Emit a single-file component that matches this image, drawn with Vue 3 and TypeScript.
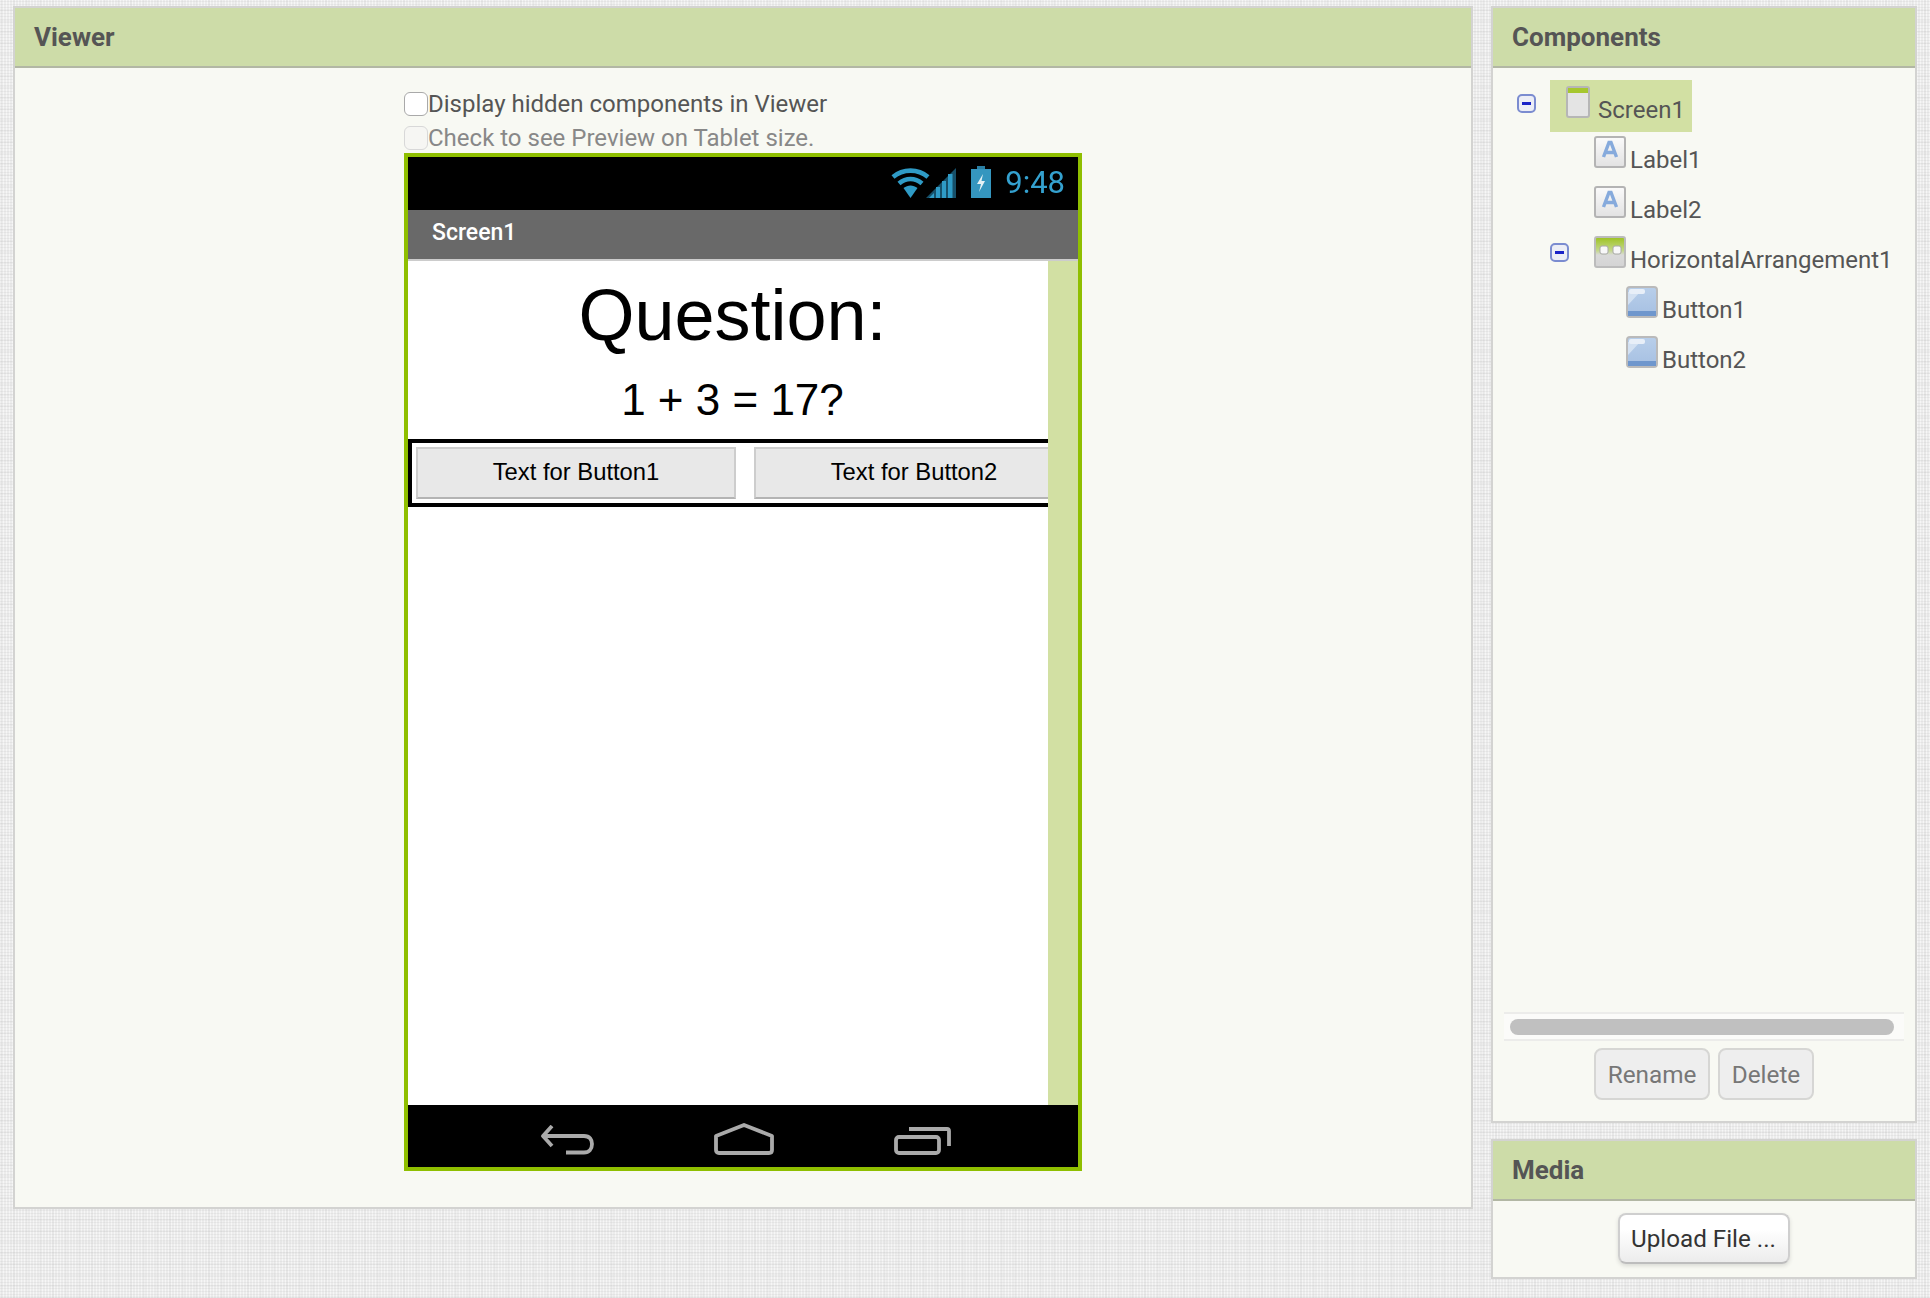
<script setup lang="ts">
interface TreeRow {
  name: string;
  icon: 'screen' | 'label' | 'arrangement' | 'button';
  depth: number;
  collapsible?: boolean;
  selected?: boolean;
}

const rows: TreeRow[] = [
  { name: 'Screen1', icon: 'screen', depth: 0, collapsible: true, selected: true },
  { name: 'Label1', icon: 'label', depth: 1 },
  { name: 'Label2', icon: 'label', depth: 1 },
  { name: 'HorizontalArrangement1', icon: 'arrangement', depth: 1, collapsible: true },
  { name: 'Button1', icon: 'button', depth: 2 },
  { name: 'Button2', icon: 'button', depth: 2 },
];
</script>

<template>
  <div class="page">
    <section class="panel viewer">
      <header class="panel-head">Viewer</header>
      <div class="viewer-body">
        <div class="viewer-col">
          <label class="check-row row-one">
            <input type="checkbox" class="box" />
            <span>Display hidden components in Viewer</span>
          </label>
          <label class="check-row row-two">
            <input type="checkbox" class="box" disabled />
            <span>Check to see Preview on Tablet size.</span>
          </label>

          <div class="phone">
            <div class="status-bar">
              <svg class="wifi" viewBox="0 0 39 30" width="39" height="30">
                <g fill="none" stroke="#2f9bc6" stroke-width="4.600">
                  <path d="M2 9C12 0.500 27 0.500 37 9" />
                  <path d="M8 15.500C15 9.500 24 9.500 31 15.500" />
                </g>
                <path d="M12.500 20C17 16.500 22 16.500 26.500 20L19.500 30Z" fill="#2f9bc6" />
              </svg>
              <svg class="signal" viewBox="0 0 30 30" width="30" height="30">
                <path d="M0 30L30 0V30Z" fill="#16506a" />
                <g fill="#2f9bc6">
                  <path d="M3 30L8 25V30Z" />
                  <rect x="10" y="19" width="4" height="11" />
                  <rect x="16" y="13" width="4" height="17" />
                  <rect x="22" y="6" width="4.500" height="24" />
                </g>
              </svg>
              <svg class="battery" viewBox="0 0 20 32" width="20" height="32">
                <rect x="6" y="0" width="8" height="4" fill="#2a7fa3" />
                <rect x="0" y="3" width="20" height="29" fill="#3596bf" />
                <path d="M12 8L6 18H10L8 26L14 15H10.500Z" fill="#e6f1f5" />
              </svg>
              <span class="clock">9:48</span>
            </div>
            <div class="title-bar">Screen1</div>

            <div class="phone-content">
              <div class="form">
                <div class="question">Question:</div>
                <div class="sum">1 + 3 = 17?</div>
                <div class="arrangement">
                  <div class="form-btn">Text for Button1</div>
                  <div class="form-btn">Text for Button2</div>
                </div>
              </div>
              <div class="strip"></div>
            </div>

            <div class="nav-bar">
              <svg class="nav-back" viewBox="0 0 54 30" width="54" height="30">
                <path d="M12 1L3 11L12 21M3 11H44C50 11 52 15 52 19C52 24 49 27.500 44 27.500H26" fill="none" stroke="#aaa" stroke-width="3.800" stroke-linejoin="round" />
              </svg>
              <svg class="nav-home" viewBox="0 0 60 32" width="60" height="32">
                <path d="M2 13L30 2L58 13V27C58 29 57 30 55 30H5C3 30 2 29 2 27Z" fill="none" stroke="#aaa" stroke-width="3.800" stroke-linejoin="round" />
              </svg>
              <svg class="nav-recent" viewBox="0 0 57 29" width="57" height="29">
                <rect x="2" y="11" width="43" height="16" rx="3" fill="none" stroke="#aaa" stroke-width="3.800" />
                <path d="M15 3H53C54.500 3 55 3.500 55 5V20" fill="none" stroke="#aaa" stroke-width="3.800" />
              </svg>
            </div>
          </div>
        </div>
      </div>
    </section>

    <aside class="side">
      <section class="panel components">
        <header class="panel-head">Components</header>
        <div class="tree">
          <div
            v-for="row in rows"
            :key="row.name"
            class="tree-row"
            :class="`depth-${row.depth}`"
          >
            <span v-if="row.collapsible" class="toggle"><i></i></span>
            <span class="tree-item" :class="{ selected: row.selected }">
              <svg v-if="row.icon === 'screen'" class="ic" viewBox="0 0 24 32" width="24" height="32">
                <rect x="1" y="1" width="22" height="30" rx="2" fill="#e4e4e4" stroke="#b6b6b6" stroke-width="2" />
                <rect x="2" y="2" width="20" height="5" fill="#a6c72f" />
              </svg>
              <svg v-else-if="row.icon === 'label'" class="ic" viewBox="0 0 32 32" width="32" height="32">
                <defs>
                  <linearGradient id="label-bg" x1="0" y1="0" x2="0" y2="1">
                    <stop offset="0" stop-color="#fbfbfb" />
                    <stop offset="1" stop-color="#e2e2e2" />
                  </linearGradient>
                </defs>
                <rect x="1" y="1" width="30" height="30" rx="2" fill="url(#label-bg)" stroke="#b4b4b4" stroke-width="2" />
                <path d="M9.500 21L15 6.500H17L22.500 21M11.500 16.500H20.500" fill="none" stroke="#86aadc" stroke-width="3.400" />
              </svg>
              <svg v-else-if="row.icon === 'arrangement'" class="ic" viewBox="0 0 32 32" width="32" height="32">
                <defs>
                  <linearGradient id="arr-bg" x1="0" y1="0" x2="0" y2="1">
                    <stop offset="0" stop-color="#9cc21f" />
                    <stop offset="0.45" stop-color="#c4d88a" />
                    <stop offset="0.6" stop-color="#dadada" />
                    <stop offset="1" stop-color="#d4d4d4" />
                  </linearGradient>
                </defs>
                <rect x="1" y="1" width="30" height="30" rx="2" fill="url(#arr-bg)" stroke="#bcbcbc" stroke-width="2" />
                <rect x="6" y="10" width="8" height="8" rx="2" fill="#f8f8f8" stroke="#a8a8a8" />
                <rect x="19" y="10" width="8" height="8" rx="2" fill="#f8f8f8" stroke="#a8a8a8" />
              </svg>
              <svg v-else class="ic" viewBox="0 0 32 32" width="32" height="32">
                <defs>
                  <linearGradient id="btn-bg" x1="0" y1="0" x2="0" y2="1">
                    <stop offset="0" stop-color="#b8cfea" />
                    <stop offset="1" stop-color="#a6c0e2" />
                  </linearGradient>
                </defs>
                <rect x="1" y="1" width="30" height="30" rx="3" fill="url(#btn-bg)" stroke="#bababa" stroke-width="2" />
                <path d="M2 25V19L14 6H2Z" fill="#d3e1f2" />
                <rect x="3" y="3" width="16" height="5" rx="2" fill="#e8eff8" />
                <rect x="2" y="25" width="28" height="5" fill="#6f97cd" />
              </svg>
              <span class="tree-name">{{ row.name }}</span>
            </span>
          </div>
        </div>
        <div class="scroll-track"><div class="scroll-thumb"></div></div>
        <div class="comp-actions">
          <button class="action">Rename</button>
          <button class="action">Delete</button>
        </div>
      </section>

      <section class="panel media">
        <header class="panel-head">Media</header>
        <div class="media-body">
          <button class="upload">Upload File ...</button>
        </div>
      </section>
    </aside>
  </div>
</template>

<style>
html,
body {
  margin: 0;
  background-color: #ececec;
  background-image:
    repeating-linear-gradient(0deg, rgba(0, 0, 0, 0.025) 0 2px, transparent 2px 11px),
    repeating-linear-gradient(90deg, rgba(0, 0, 0, 0.02) 0 2px, transparent 2px 13px),
    repeating-linear-gradient(0deg, rgba(0, 0, 0, 0.04) 0 1px, transparent 1px 3px),
    repeating-linear-gradient(90deg, rgba(255, 255, 255, 0.55) 0 1px, transparent 1px 3px);
}
</style>

<style scoped>
.page {
  display: flex;
  gap: 18px;
  width: 1930px;
  height: 1298px;
  box-sizing: border-box;
  padding: 6px 0 0 13px;
  font-family: Roboto, "Liberation Sans", sans-serif;
  color: #555;
}

.panel {
  box-sizing: border-box;
  background: #f8f9f3;
  border: 2px solid #d3d3d1;
}

.panel-head {
  box-sizing: border-box;
  height: 60px;
  padding: 9px 0 0 19px;
  background: #cddca8;
  border-bottom: 2px solid #b2b7a4;
  font-size: 26px;
  font-weight: 700;
  line-height: 40px;
  color: #555;
}

.viewer {
  width: 1460px;
  height: 1203px;
}

.viewer-body {
  display: flex;
  justify-content: center;
  padding-top: 20px;
}

.viewer-col {
  width: 678px;
}

.check-row {
  display: flex;
  font-size: 24px;
}

.row-one {
  height: 34px;
  padding-top: 4px;
  box-sizing: border-box;
  line-height: 24px;
}

.row-two {
  height: 31px;
  padding-top: 4px;
  box-sizing: border-box;
  line-height: 24px;
  color: #888;
}

.box {
  appearance: none;
  flex: none;
  width: 24px;
  height: 24px;
  margin: 0;
  box-sizing: border-box;
  background: #fff;
  border: 1px solid #a9a9a9;
  border-radius: 6px;
}

.box:disabled {
  background: #f6f6f3;
  border-color: #d8d8d8;
}

.phone {
  display: flex;
  flex-direction: column;
  box-sizing: border-box;
  height: 1018px;
  border: 4px solid #8fbf00;
  background: #fff;
}

.status-bar {
  display: flex;
  align-items: center;
  box-sizing: border-box;
  height: 53px;
  flex: none;
  padding: 0 13px 2px 0;
  background: #000;
  justify-content: flex-end;
  filter: blur(0.4px);
}

.wifi {
  margin-right: -4px;
}

.signal {
  margin-right: 15px;
}

.battery {
  margin-right: 14px;
  margin-bottom: 2px;
}

.clock {
  font-size: 31px;
  font-weight: 400;
  color: #34a1cf;
  line-height: 32px;
}

.title-bar {
  flex: none;
  box-sizing: border-box;
  height: 51px;
  padding-left: 24px;
  background: #696969;
  border-bottom: 2px solid #ccc;
  color: #fff;
  font-size: 23px;
  font-weight: 500;
  line-height: 46px;
}

.phone-content {
  flex: 1;
  display: flex;
  min-height: 0;
}

.form {
  flex: 1;
  min-width: 0;
  overflow: hidden;
  font-family: "Liberation Sans", Arial, sans-serif;
  color: #000;
}

.question {
  height: 98px;
  padding: 11px 0 0 9px;
  box-sizing: border-box;
  font-size: 72px;
  line-height: 86px;
  text-align: center;
}

.sum {
  height: 80px;
  font-size: 44px;
  line-height: 50px;
  padding: 16px 0 0 9px;
  box-sizing: border-box;
  text-align: center;
}

.arrangement {
  display: flex;
  gap: 18px;
  box-sizing: border-box;
  width: 680px;
  height: 68px;
  padding: 4px;
  border: 4px solid #000;
}

.form-btn {
  flex: none;
  box-sizing: border-box;
  width: 320px;
  height: 52px;
  background: #e8e8e8;
  border: 2px solid #cdcdcd;
  border-bottom-color: #b4b4b4;
  font-size: 23.800px;
  line-height: 45px;
  text-align: center;
}

.strip {
  flex: none;
  width: 30px;
  background: #d2e0a3;
}

.nav-bar {
  flex: none;
  position: relative;
  height: 62px;
  background: #000;
  filter: blur(0.6px);
}

.nav-bar svg {
  position: absolute;
}

.nav-back {
  left: 132px;
  top: 20px;
}

.nav-home {
  left: 306px;
  top: 18px;
}

.nav-recent {
  left: 486px;
  top: 21px;
}

.side {
  display: flex;
  flex-direction: column;
  gap: 16px;
  width: 426px;
}

.components {
  display: flex;
  flex-direction: column;
  height: 1117px;
}

.tree {
  flex: 1;
  padding-top: 12px;
}

.tree-row {
  display: flex;
  align-items: flex-start;
  position: relative;
  height: 50px;
  font-size: 24px;
  line-height: 30px;
  color: #555;
}

.tree-row:first-child {
  height: 56px;
}

.depth-0 {
  padding-left: 57px;
}

.depth-1 {
  padding-left: 101px;
}

.depth-2 {
  padding-left: 133px;
}

.toggle {
  position: absolute;
  left: 24px;
  top: 14px;
  display: flex;
  align-items: center;
  justify-content: center;
  box-sizing: border-box;
  width: 19px;
  height: 19px;
  background: #eceef6;
  border: 2px solid #7b8cd0;
  border-radius: 5px;
  filter: blur(0.4px);
}

.depth-1 .toggle {
  left: 57px;
  top: 7px;
}

.toggle i {
  display: block;
  width: 9px;
  height: 3px;
  background: #1a23c8;
}

.tree-item {
  display: flex;
  align-items: flex-start;
  height: 32px;
}

.tree-item.selected {
  box-sizing: border-box;
  height: 52px;
  width: 142px;
  padding: 6px 0 0 16px;
  background: #d2e0a3;
}

.ic {
  flex: none;
  filter: blur(0.5px);
}

.tree-name {
  margin-left: 4px;
  line-height: 30px;
  padding-top: 9px;
}

.selected .tree-name {
  margin-left: 8px;
  padding-top: 9px;
}

.scroll-track {
  flex: none;
  display: flex;
  align-items: center;
  box-sizing: border-box;
  height: 29px;
  margin: 0 11px;
  padding: 0 10px 0 6px;
  background: #fbfbf9;
  border-top: 2px solid #ececea;
  border-bottom: 2px solid #ececea;
}

.scroll-thumb {
  flex: 1;
  height: 16px;
  border-radius: 8px;
  background: #c0c0c0;
}

.comp-actions {
  flex: none;
  display: flex;
  justify-content: center;
  gap: 8px;
  height: 80px;
  padding-top: 7px;
  box-sizing: border-box;
}

button {
  font-family: Roboto, "Liberation Sans", sans-serif;
  box-sizing: border-box;
  margin: 0;
  padding: 0;
}

.action {
  height: 52px;
  background: #eee;
  border: 2px solid #d6d6d4;
  border-radius: 8px;
  color: #777;
  font-size: 24.300px;
}

.action:first-child {
  width: 116px;
}

.action:last-child {
  width: 96px;
}

.media {
  height: 140px;
}

.media-body {
  display: flex;
  justify-content: center;
  padding-top: 12px;
  padding-right: 1px;
}

.upload {
  width: 172px;
  height: 51px;
  background: linear-gradient(#fff 30%, #ececec);
  border: 2px solid #cfcfcf;
  border-bottom-color: #bdbdbd;
  border-radius: 8px;
  color: #333;
  font-size: 24.200px;
  box-shadow: 0 2px 4px rgba(0, 0, 0, 0.12);
}
</style>
